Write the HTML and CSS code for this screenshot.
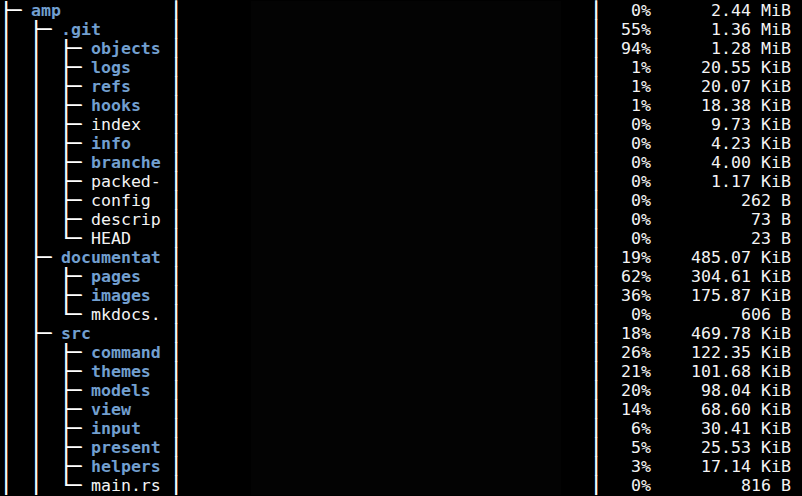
FILE: index.html
```html
<!DOCTYPE html>
<html>
<head>
<meta charset="utf-8">
<link rel="stylesheet" href="styles.css">
</head>
<body>
<div class="term">
  <div class="row"><span class="tree"><span class="ln">├─ </span><b class="dir">amp</b></span><span class="sep">│</span><span class="bar"></span><span class="sep">│</span><span class="pct">0%</span><span class="size">2.44 MiB</span></div>
  <div class="row"><span class="tree"><span class="ln">│  ├─ </span><b class="dir">.git</b></span><span class="sep">│</span><span class="bar"></span><span class="sep">│</span><span class="pct">55%</span><span class="size">1.36 MiB</span></div>
  <div class="row"><span class="tree"><span class="ln">│  │  ├─ </span><b class="dir">objects</b></span><span class="sep">│</span><span class="bar"></span><span class="sep">│</span><span class="pct">94%</span><span class="size">1.28 MiB</span></div>
  <div class="row"><span class="tree"><span class="ln">│  │  ├─ </span><b class="dir">logs</b></span><span class="sep">│</span><span class="bar"></span><span class="sep">│</span><span class="pct">1%</span><span class="size">20.55 KiB</span></div>
  <div class="row"><span class="tree"><span class="ln">│  │  ├─ </span><b class="dir">refs</b></span><span class="sep">│</span><span class="bar"></span><span class="sep">│</span><span class="pct">1%</span><span class="size">20.07 KiB</span></div>
  <div class="row"><span class="tree"><span class="ln">│  │  ├─ </span><b class="dir">hooks</b></span><span class="sep">│</span><span class="bar"></span><span class="sep">│</span><span class="pct">1%</span><span class="size">18.38 KiB</span></div>
  <div class="row"><span class="tree"><span class="ln">│  │  ├─ </span><span class="file">index</span></span><span class="sep">│</span><span class="bar"></span><span class="sep">│</span><span class="pct">0%</span><span class="size">9.73 KiB</span></div>
  <div class="row"><span class="tree"><span class="ln">│  │  ├─ </span><b class="dir">info</b></span><span class="sep">│</span><span class="bar"></span><span class="sep">│</span><span class="pct">0%</span><span class="size">4.23 KiB</span></div>
  <div class="row"><span class="tree"><span class="ln">│  │  ├─ </span><b class="dir">branche</b></span><span class="sep">│</span><span class="bar"></span><span class="sep">│</span><span class="pct">0%</span><span class="size">4.00 KiB</span></div>
  <div class="row"><span class="tree"><span class="ln">│  │  ├─ </span><span class="file">packed-</span></span><span class="sep">│</span><span class="bar"></span><span class="sep">│</span><span class="pct">0%</span><span class="size">1.17 KiB</span></div>
  <div class="row"><span class="tree"><span class="ln">│  │  ├─ </span><span class="file">config</span></span><span class="sep">│</span><span class="bar"></span><span class="sep">│</span><span class="pct">0%</span><span class="size">262 B</span></div>
  <div class="row"><span class="tree"><span class="ln">│  │  ├─ </span><span class="file">descrip</span></span><span class="sep">│</span><span class="bar"></span><span class="sep">│</span><span class="pct">0%</span><span class="size">73 B</span></div>
  <div class="row"><span class="tree"><span class="ln">│  │  └─ </span><span class="file">HEAD</span></span><span class="sep">│</span><span class="bar"></span><span class="sep">│</span><span class="pct">0%</span><span class="size">23 B</span></div>
  <div class="row"><span class="tree"><span class="ln">│  ├─ </span><b class="dir">documentat</b></span><span class="sep">│</span><span class="bar"></span><span class="sep">│</span><span class="pct">19%</span><span class="size">485.07 KiB</span></div>
  <div class="row"><span class="tree"><span class="ln">│  │  ├─ </span><b class="dir">pages</b></span><span class="sep">│</span><span class="bar"></span><span class="sep">│</span><span class="pct">62%</span><span class="size">304.61 KiB</span></div>
  <div class="row"><span class="tree"><span class="ln">│  │  ├─ </span><b class="dir">images</b></span><span class="sep">│</span><span class="bar"></span><span class="sep">│</span><span class="pct">36%</span><span class="size">175.87 KiB</span></div>
  <div class="row"><span class="tree"><span class="ln">│  │  └─ </span><span class="file">mkdocs.</span></span><span class="sep">│</span><span class="bar"></span><span class="sep">│</span><span class="pct">0%</span><span class="size">606 B</span></div>
  <div class="row"><span class="tree"><span class="ln">│  ├─ </span><b class="dir">src</b></span><span class="sep">│</span><span class="bar"></span><span class="sep">│</span><span class="pct">18%</span><span class="size">469.78 KiB</span></div>
  <div class="row"><span class="tree"><span class="ln">│  │  ├─ </span><b class="dir">command</b></span><span class="sep">│</span><span class="bar"></span><span class="sep">│</span><span class="pct">26%</span><span class="size">122.35 KiB</span></div>
  <div class="row"><span class="tree"><span class="ln">│  │  ├─ </span><b class="dir">themes</b></span><span class="sep">│</span><span class="bar"></span><span class="sep">│</span><span class="pct">21%</span><span class="size">101.68 KiB</span></div>
  <div class="row"><span class="tree"><span class="ln">│  │  ├─ </span><b class="dir">models</b></span><span class="sep">│</span><span class="bar"></span><span class="sep">│</span><span class="pct">20%</span><span class="size">98.04 KiB</span></div>
  <div class="row"><span class="tree"><span class="ln">│  │  ├─ </span><b class="dir">view</b></span><span class="sep">│</span><span class="bar"></span><span class="sep">│</span><span class="pct">14%</span><span class="size">68.60 KiB</span></div>
  <div class="row"><span class="tree"><span class="ln">│  │  ├─ </span><b class="dir">input</b></span><span class="sep">│</span><span class="bar"></span><span class="sep">│</span><span class="pct">6%</span><span class="size">30.41 KiB</span></div>
  <div class="row"><span class="tree"><span class="ln">│  │  ├─ </span><b class="dir">present</b></span><span class="sep">│</span><span class="bar"></span><span class="sep">│</span><span class="pct">5%</span><span class="size">25.53 KiB</span></div>
  <div class="row"><span class="tree"><span class="ln">│  │  ├─ </span><b class="dir">helpers</b></span><span class="sep">│</span><span class="bar"></span><span class="sep">│</span><span class="pct">3%</span><span class="size">17.14 KiB</span></div>
  <div class="row"><span class="tree"><span class="ln">│  │  └─ </span><span class="file">main.rs</span></span><span class="sep">│</span><span class="bar"></span><span class="sep">│</span><span class="pct">0%</span><span class="size">816 B</span></div>
</div>
</body>
</html>
```
FILE: styles.css
```css
html, body {
  margin: 0;
  padding: 0;
  background: #000;
}
.term {
  box-sizing: border-box;
  width: 802px;
  height: 496px;
  padding: 1px 0 0 1px;
  overflow: hidden;
  font-family: "DejaVu Sans Mono", monospace;
  font-size: 16.6px;
  line-height: 19px;
  color: #f4f4f4;
}
.row {
  display: grid;
  grid-template-columns: 170px 10px 410px 10px 50px 140px;
  height: 19px;
  white-space: pre;
}
.tree {
  overflow: hidden;
}
.ln, .sep {
  color: #ffffff;
  text-shadow: 0.7px 0 0 #ffffff;
}
.dir {
  color: #729fcf;
  font-weight: bold;
}
.file {
  color: #f4f4f4;
  font-weight: normal;
}
.bar {
  display: block;
  background: linear-gradient(to right, transparent 70px, #030303 70px, #030303 380px, transparent 380px);
}
.pct {
  text-align: right;
}
.size {
  text-align: right;
}
```
